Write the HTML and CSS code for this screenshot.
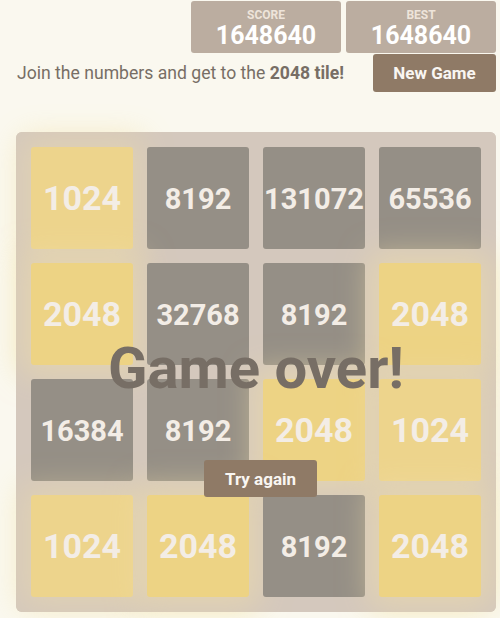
FILE: index.html
```html
<!DOCTYPE html>
<html>
<head>
<meta charset="utf-8">
<link rel="stylesheet" href="styles.css">
</head>
<body>
<div class="page">
  <div class="scores">
    <div class="score-box"><div class="label">SCORE</div><div class="value">1648640</div></div>
    <div class="score-box"><div class="label">BEST</div><div class="value">1648640</div></div>
  </div>
  <div class="intro-row">
    <p class="intro">Join the numbers and get to the <strong>2048 tile!</strong></p>
    <a class="btn new-game">New Game</a>
  </div>
  <div class="board">
    <div class="grid">
      <div class="tile t1024">1024</div>
      <div class="tile super">8192</div>
      <div class="tile super">131072</div>
      <div class="tile super">65536</div>
      <div class="tile t2048">2048</div>
      <div class="tile super">32768</div>
      <div class="tile super">8192</div>
      <div class="tile t2048">2048</div>
      <div class="tile super">16384</div>
      <div class="tile super">8192</div>
      <div class="tile t2048">2048</div>
      <div class="tile t1024">1024</div>
      <div class="tile t1024">1024</div>
      <div class="tile t2048">2048</div>
      <div class="tile super">8192</div>
      <div class="tile t2048">2048</div>
    </div>
    <div class="overlay">
      <p class="over-title">Game over!</p>
      <a class="btn retry">Try again</a>
    </div>
  </div>
</div>
</body>
</html>
```
FILE: styles.css
```css
html, body {
  margin: 0;
  padding: 0;
  background: #faf8ef;
}
body {
  font-family: Roboto, "Noto Sans", sans-serif;
  color: #776e65;
  width: 500px;
  height: 618px;
  overflow: hidden;
}
.page {
  padding: 1px 4px 0 16px;
}
.scores {
  display: flex;
  justify-content: flex-end;
  gap: 5px;
}
.score-box {
  width: 150px;
  height: 52px;
  background: #bbada0;
  border-radius: 3px;
  text-align: center;
  color: #fff;
}
.label {
  font-size: 12px;
  font-weight: 700;
  color: #eee4da;
  line-height: 13px;
  padding-top: 8px;
}
.value {
  font-size: 25px;
  font-weight: 700;
  line-height: 27px;
}
.intro-row {
  display: flex;
  justify-content: space-between;
  align-items: center;
  margin-top: 1px;
}
.intro {
  margin: 0 0 0 1px;
  font-size: 17.6px;
  color: #776e65;
}
.btn {
  display: flex;
  align-items: center;
  justify-content: center;
  background: #8f7a66;
  color: #f9f6f2;
  border-radius: 3px;
  font-weight: 700;
  font-size: 17px;
}
.new-game {
  width: 123px;
  height: 38px;
}
.board {
  position: relative;
  margin-top: 40px;
  width: 480px;
  height: 480px;
  background: #bbada0;
  border-radius: 6px;
  box-sizing: border-box;
  padding: 15px;
}
.grid {
  display: grid;
  grid-template-columns: repeat(4, 102px);
  grid-template-rows: repeat(4, 102px);
  gap: 14px;
}
.tile {
  border-radius: 3px;
  display: flex;
  align-items: center;
  justify-content: center;
  font-weight: 700;
  color: #f9f6f2;
  white-space: nowrap;
}
.t1024 {
  background: #edc53f;
  font-size: 34px;
  box-shadow: 0 0 30px 10px rgba(243, 215, 116, 0.4);
}
.t2048 {
  background: #edc22e;
  font-size: 34px;
  box-shadow: 0 0 30px 10px rgba(243, 215, 116, 0.55);
}
.super {
  background: #3c3a32;
  font-size: 29px;
  padding-top: 2px;
  box-sizing: border-box;
}
.overlay {
  position: absolute;
  inset: 0;
  background: rgba(238, 228, 218, 0.5);
  border-radius: 6px;
  display: flex;
  flex-direction: column;
  align-items: center;
}
.over-title {
  margin: 206px 0 0;
  font-size: 58px;
  font-weight: 700;
  line-height: 60px;
  height: 60px;
  color: #776e65;
}
.retry {
  margin: 62px 0 0 9px;
  width: 113px;
  height: 37px;
}
```
